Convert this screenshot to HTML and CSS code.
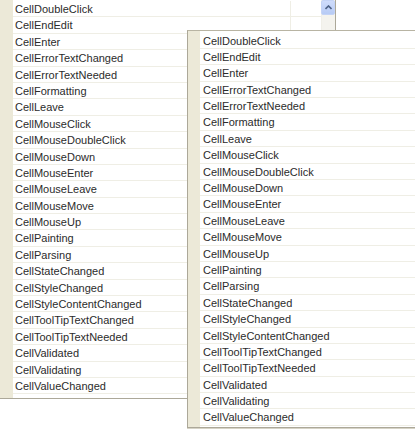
FILE: index.html
```html
<!DOCTYPE html>
<html lang="en">
<head>
    <meta charset="UTF-8">
    <title>Cell events</title>
    <link rel="stylesheet" href="styles.css">
</head>
<body>
    <div class="desk">
        <div class="panel back">
            <div class="grid">
                <div class="row"><span class="name">CellDoubleClick</span><span class="extra"></span></div>
                <div class="row"><span class="name">CellEndEdit</span><span class="extra"></span></div>
                <div class="row"><span class="name">CellEnter</span><span class="extra"></span></div>
                <div class="row"><span class="name">CellErrorTextChanged</span><span class="extra"></span></div>
                <div class="row"><span class="name">CellErrorTextNeeded</span><span class="extra"></span></div>
                <div class="row"><span class="name">CellFormatting</span><span class="extra"></span></div>
                <div class="row"><span class="name">CellLeave</span><span class="extra"></span></div>
                <div class="row"><span class="name">CellMouseClick</span><span class="extra"></span></div>
                <div class="row"><span class="name">CellMouseDoubleClick</span><span class="extra"></span></div>
                <div class="row"><span class="name">CellMouseDown</span><span class="extra"></span></div>
                <div class="row"><span class="name">CellMouseEnter</span><span class="extra"></span></div>
                <div class="row"><span class="name">CellMouseLeave</span><span class="extra"></span></div>
                <div class="row"><span class="name">CellMouseMove</span><span class="extra"></span></div>
                <div class="row"><span class="name">CellMouseUp</span><span class="extra"></span></div>
                <div class="row"><span class="name">CellPainting</span><span class="extra"></span></div>
                <div class="row"><span class="name">CellParsing</span><span class="extra"></span></div>
                <div class="row"><span class="name">CellStateChanged</span><span class="extra"></span></div>
                <div class="row"><span class="name">CellStyleChanged</span><span class="extra"></span></div>
                <div class="row"><span class="name">CellStyleContentChanged</span><span class="extra"></span></div>
                <div class="row"><span class="name">CellToolTipTextChanged</span><span class="extra"></span></div>
                <div class="row"><span class="name">CellToolTipTextNeeded</span><span class="extra"></span></div>
                <div class="row"><span class="name">CellValidated</span><span class="extra"></span></div>
                <div class="row"><span class="name">CellValidating</span><span class="extra"></span></div>
                <div class="row"><span class="name">CellValueChanged</span><span class="extra"></span></div>
            </div>
            <div class="scrollbar">
                <div class="arrow">
                    <svg width="7" height="5" viewBox="0 0 7 5"><path d="M0.5 4 L3.5 1 L6.5 4" fill="none" stroke="#4d6185" stroke-width="1.6"/></svg>
                </div>
            </div>
        </div>

        <div class="panel front">
            <div class="list">
                <div class="item">CellDoubleClick</div>
                <div class="item">CellEndEdit</div>
                <div class="item">CellEnter</div>
                <div class="item">CellErrorTextChanged</div>
                <div class="item">CellErrorTextNeeded</div>
                <div class="item">CellFormatting</div>
                <div class="item">CellLeave</div>
                <div class="item">CellMouseClick</div>
                <div class="item">CellMouseDoubleClick</div>
                <div class="item">CellMouseDown</div>
                <div class="item">CellMouseEnter</div>
                <div class="item">CellMouseLeave</div>
                <div class="item">CellMouseMove</div>
                <div class="item">CellMouseUp</div>
                <div class="item">CellPainting</div>
                <div class="item">CellParsing</div>
                <div class="item">CellStateChanged</div>
                <div class="item">CellStyleChanged</div>
                <div class="item">CellStyleContentChanged</div>
                <div class="item">CellToolTipTextChanged</div>
                <div class="item">CellToolTipTextNeeded</div>
                <div class="item">CellValidated</div>
                <div class="item">CellValidating</div>
                <div class="item">CellValueChanged</div>
            </div>
        </div>
    </div>
</body>
</html>
```

FILE: styles.css
```css
* {
    margin: 0;
    padding: 0;
    box-sizing: border-box;
}

body {
    font-family: "Liberation Sans", Arial, sans-serif;
    font-size: 11px;
    color: #2b2b2b;
    background: white;
    width: 415px;
    height: 429px;
    overflow: hidden;
}

.desk {
    position: relative;
    width: 415px;
    height: 429px;
}

.panel {
    background: white;
}

/* back window: grid with scrollbar */
.back {
    display: flex;
    width: 336px;
    height: 399px;
    border-right: 1px solid #aca899;
    border-bottom: 1px solid #aca899;
}

.grid {
    flex: 1;
    padding-top: 1px;
    background: linear-gradient(to right, #ece9d8 0 13px, white 13px);
}

.row {
    display: flex;
    height: 16.4px;
    line-height: 16px;
    border-bottom: 1px solid #efeee5;
    margin-left: 13px;
}

.row .name {
    width: 278px;
    padding-left: 2px;
    border-right: 1px solid #efeee5;
    white-space: nowrap;
}

.row .extra {
    flex: 1;
}

.scrollbar {
    width: 14px;
    background: #f4f3ee;
    border-left: 1px solid #f0efe8;
}

.arrow {
    height: 15px;
    margin: 0 0 0 -1px;
    background: linear-gradient(#cfdcfb, #b7cbf5);
    border: 1px solid #c4d3f6;
    border-radius: 2px;
    display: flex;
    align-items: center;
    justify-content: center;
}

/* front dropdown list */
.front {
    position: absolute;
    left: 187px;
    top: 30px;
    width: 240px;
    height: 398px;
    border: 1px solid #aca899;
    border-top-color: #b8b4a3;
    box-shadow: 0 1px 0 #d6d3c6;
    background: linear-gradient(to right, #ece9d8 0 12px, white 12px);
}

.list {
    padding-left: 12px;
    padding-top: 1.5px;
}

.item {
    height: 16.4px;
    line-height: 16px;
    padding-left: 3px;
    border-bottom: 1px solid #efeee5;
    background: white;
    white-space: nowrap;
}
```
